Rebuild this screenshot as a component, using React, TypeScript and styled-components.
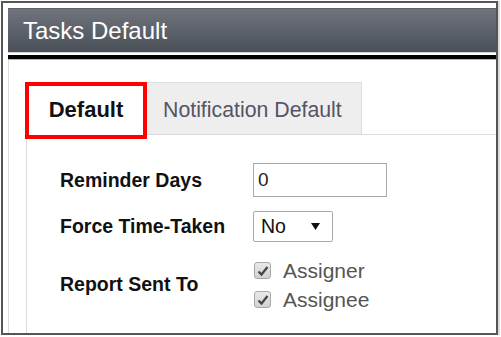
import styled, { createGlobalStyle } from 'styled-components';

const GlobalStyle = createGlobalStyle`
    body {
        margin: 0;
        background: #fff;
        font-family: "Liberation Sans", Arial, sans-serif;
    }
`

const Frame = styled.div`
    margin: 1px 0 0 1px;
    width: 497px;
    height: 334px;
    box-sizing: border-box;
    border: 2px solid #555;
    padding: 5px 0 0 5px;
    overflow: hidden;
    box-shadow: 2px 0 0 #dcdcdc;
`

const Header = styled.div`
    height: 45px;
    box-sizing: border-box;
    border-top: 1px solid #5e6269;
    background: linear-gradient(#70747c, #4a5058);
    color: #fff;
    font-size: 24px;
    line-height: 44px;
    padding-left: 15px;
    border-bottom: 1px solid #cfd1d3;
`

const Rule = styled.div`
    margin-top: 2px;
    height: 4px;
    background: #000;
    border-bottom: 1px solid #b4b4b4;
`

const Content = styled.div`
    border-left: 1px solid #dcdcdc;
    padding-top: 22px;
    height: 300px;
`

const TabBar = styled.div`
    display: flex;
    align-items: flex-start;
    margin-left: 16px;
    position: relative;
    z-index: 1;
`

const ActiveTab = styled.div`
    width: 122px;
    height: 57px;
    box-sizing: border-box;
    border: 4px solid #f00;
    background: #fff;
    font-size: 22px;
    font-weight: bold;
    line-height: 47px;
    text-align: center;
    color: #111;
    margin-bottom: -5px;
`

const Tab = styled.div`
    height: 52px;
    box-sizing: border-box;
    background: #eee;
    border: 1px solid #ddd;
    border-bottom: none;
    border-left: none;
    padding: 4px 19px 0 16px;
    font-size: 21.3px;
    line-height: 47px;
    color: #555566;
`

const Panel = styled.div`
    margin-left: 17px;
    border-top: 1px solid #dcdcdc;
    border-left: 1px solid #dcdcdc;
    padding: 28px 0 0 33px;
    height: 200px;
`

const Form = styled.div`
    display: grid;
    grid-template-columns: 193px auto;
    row-gap: 14px;
    align-items: center;
`

const Label = styled.div`
    font-size: 19.5px;
    font-weight: bold;
    color: #111;
`

const TextBox = styled.div`
    width: 134px;
    height: 34px;
    box-sizing: border-box;
    border: 1px solid #a9a9a9;
    padding-left: 4px;
    font-size: 19px;
    line-height: 32px;
    color: #222;
`

const Select = styled.div`
    width: 80px;
    height: 31px;
    box-sizing: border-box;
    border: 1px solid #a9a9a9;
    border-radius: 2px;
    display: flex;
    align-items: center;
    justify-content: space-between;
    padding: 0 12px 0 7px;
    font-size: 19.5px;
    color: #111;
`

const Checks = styled.div`
    display: flex;
    flex-direction: column;
    gap: 4px;
    padding-top: 2px;
`

const CheckRow = styled.div`
    display: flex;
    align-items: center;
    gap: 12px;
    font-size: 21px;
    color: #555;
    height: 25px;
`

const Box = styled.span`
    width: 17px;
    height: 17px;
    box-sizing: border-box;
    border: 1px solid #a8a8a8;
    border-radius: 3px;
    background: linear-gradient(#e8e8e8, #d2d2d2);
    display: flex;
    align-items: center;
    justify-content: center;
    margin-left: 1px;
`

const Check = ({ label }: { label: string }) => (
    <CheckRow>
        <Box>
            <svg width="12" height="12" viewBox="0 0 12 12">
                <path d="M1.5 6.5 L4.5 9.5 L10.5 2" fill="none" stroke="#444" strokeWidth="2.2" />
            </svg>
        </Box>
        {label}
    </CheckRow>
)

const App = () => {
    return (
        <>
            <GlobalStyle />
            <Frame>
                <Header>Tasks Default</Header>
                <Rule />
                <Content>
                    <TabBar>
                        <ActiveTab>Default</ActiveTab>
                        <Tab>Notification Default</Tab>
                    </TabBar>
                    <Panel>
                        <Form>
                            <Label>Reminder Days</Label>
                            <TextBox>0</TextBox>
                            <Label>Force Time-Taken</Label>
                            <Select>
                                No
                                <svg width="9" height="7" viewBox="0 0 9 7">
                                    <path d="M0 0 H9 L4.5 7 Z" fill="#111" />
                                </svg>
                            </Select>
                            <Label>Report Sent To</Label>
                            <Checks>
                                <Check label="Assigner" />
                                <Check label="Assignee" />
                            </Checks>
                        </Form>
                    </Panel>
                </Content>
            </Frame>
        </>
    );
};

export default App;
